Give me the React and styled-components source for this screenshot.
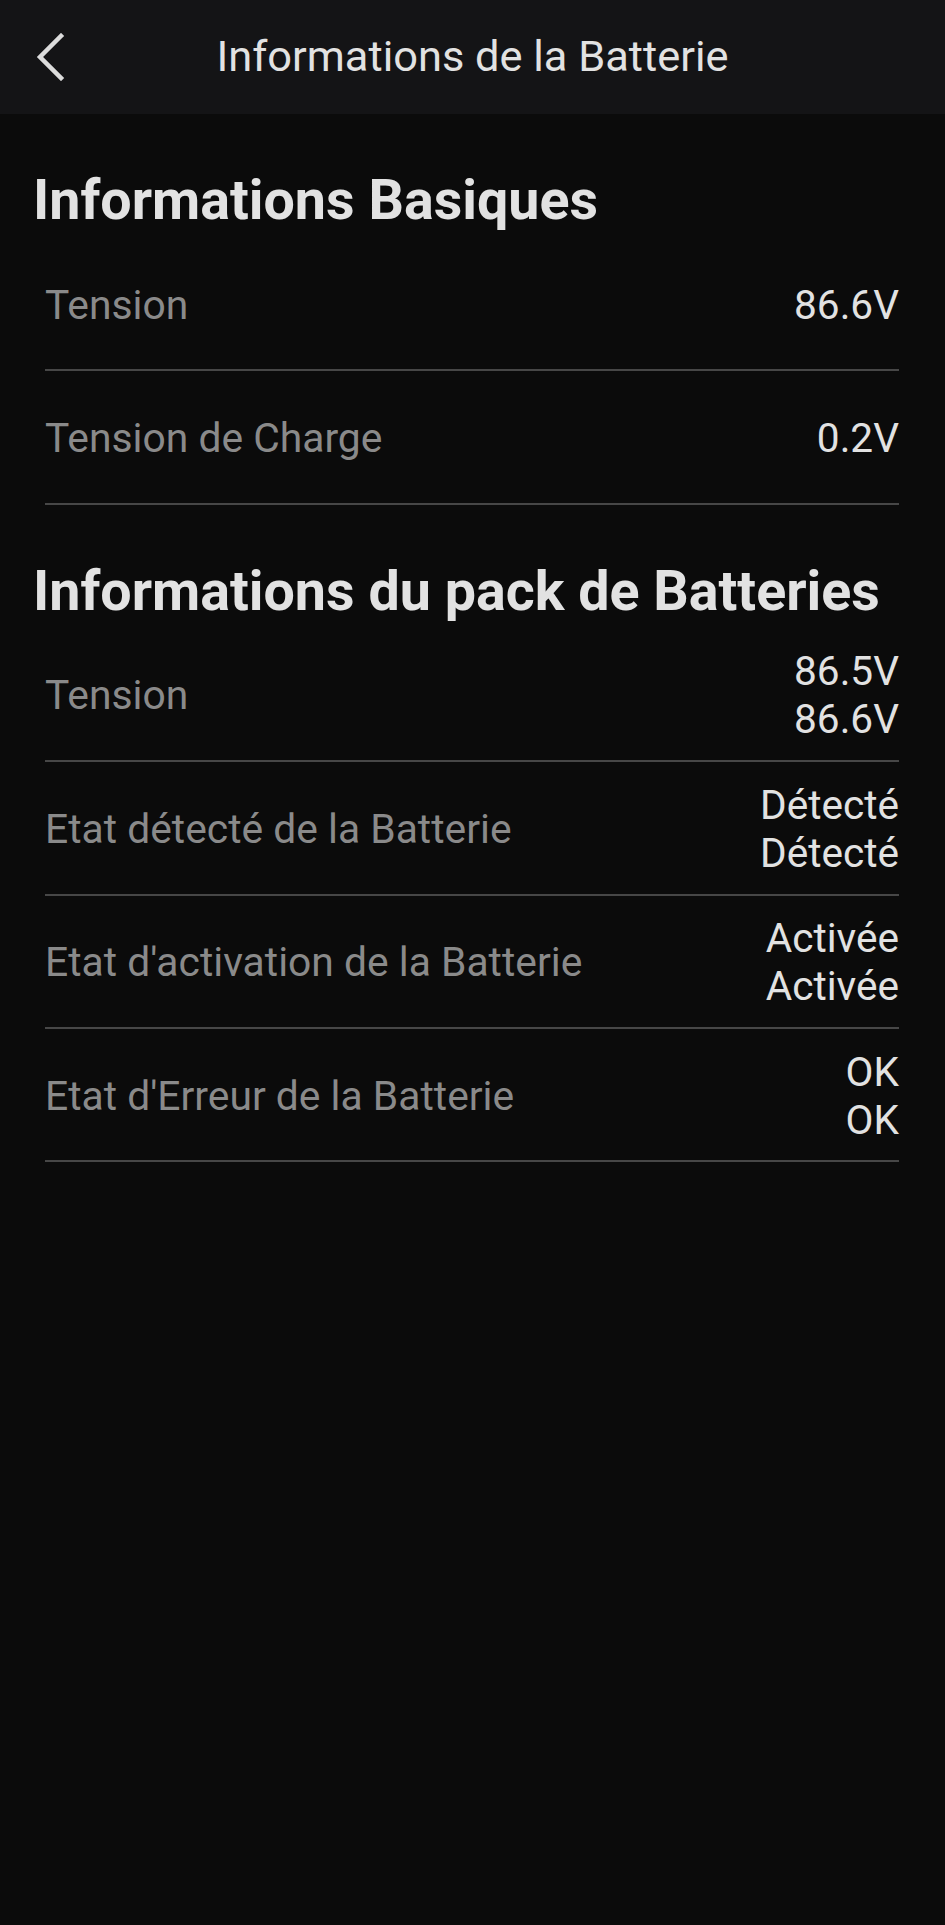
import styled, { createGlobalStyle } from "styled-components";

const GlobalStyle = createGlobalStyle`
  html, body {
    margin: 0;
    padding: 0;
    background: #0b0b0b;
  }
  body {
    font-family: Roboto, "Noto Sans", "Liberation Sans", sans-serif;
  }
`;

const Page = styled.div`
  min-height: 1925px;
  background: #0b0b0b;
  color: #e2e2e2;
`;

const TopBar = styled.header`
  height: 114px;
  background: #141416;
  display: grid;
  grid-template-columns: 114px 1fr 114px;
  align-items: center;
`;

const BackButton = styled.button`
  background: none;
  border: none;
  padding: 0;
  width: 100%;
  height: 100%;
  display: flex;
  align-items: center;
  justify-content: flex-start;
  padding-left: 35px;
  cursor: pointer;
`;

const TopTitle = styled.h1`
  margin: 0;
  text-align: center;
  font-size: 43.4px;
  font-weight: 400;
  line-height: 52px;
  color: #e2e2e2;
  white-space: nowrap;
`;

const Section = styled.section`
  padding-top: 53px;
`;

const SectionTitle = styled.h2`
  margin: 0 0 5px;
  padding-left: 33px;
  font-size: 55.6px;
  font-weight: 700;
  line-height: 66px;
  color: #e2e2e2;
`;

const Row = styled.div`
  margin: 0 46px 0 45px;
  height: 133.4px;
  box-sizing: border-box;
  border-bottom: 2px solid #474747;
  display: flex;
  align-items: center;
  justify-content: space-between;
  padding-top: 2px;
`;

const Label = styled.span`
  font-size: 40.8px;
  line-height: 48px;
  color: #8a8a8a;
`;

const Values = styled.div`
  display: flex;
  flex-direction: column;
  align-items: flex-end;
  font-size: 40.6px;
  line-height: 48px;
  color: #e2e2e2;
`;

const basic = [
  { label: "Tension", values: ["86.6V"] },
  { label: "Tension de Charge", values: ["0.2V"] },
];

const pack = [
  { label: "Tension", values: ["86.5V", "86.6V"] },
  { label: "Etat détecté de la Batterie", values: ["Détecté", "Détecté"] },
  { label: "Etat d'activation de la Batterie", values: ["Activée", "Activée"] },
  { label: "Etat d'Erreur de la Batterie", values: ["OK", "OK"] },
];

function InfoRow({ label, values }) {
  return (
    <Row>
      <Label>{label}</Label>
      <Values>
        {values.map((v, i) => (
          <span key={i}>{v}</span>
        ))}
      </Values>
    </Row>
  );
}

export default function App() {
  return (
    <>
      <GlobalStyle />
      <Page>
        <TopBar>
          <BackButton aria-label="Retour">
            <svg width="30" height="48" viewBox="0 0 30 48" fill="none">
              <path
                d="M26 3 L5 24 L26 45"
                stroke="#dcdcdc"
                strokeWidth="4.5"
                strokeLinecap="square"
                strokeLinejoin="miter"
              />
            </svg>
          </BackButton>
          <TopTitle>Informations de la Batterie</TopTitle>
          <div />
        </TopBar>

        <Section>
          <SectionTitle>Informations Basiques</SectionTitle>
          {basic.map((r) => (
            <InfoRow key={r.label} {...r} />
          ))}
        </Section>

        <Section>
          <SectionTitle>Informations du pack de Batteries</SectionTitle>
          {pack.map((r) => (
            <InfoRow key={r.label} {...r} />
          ))}
        </Section>
      </Page>
    </>
  );
}
